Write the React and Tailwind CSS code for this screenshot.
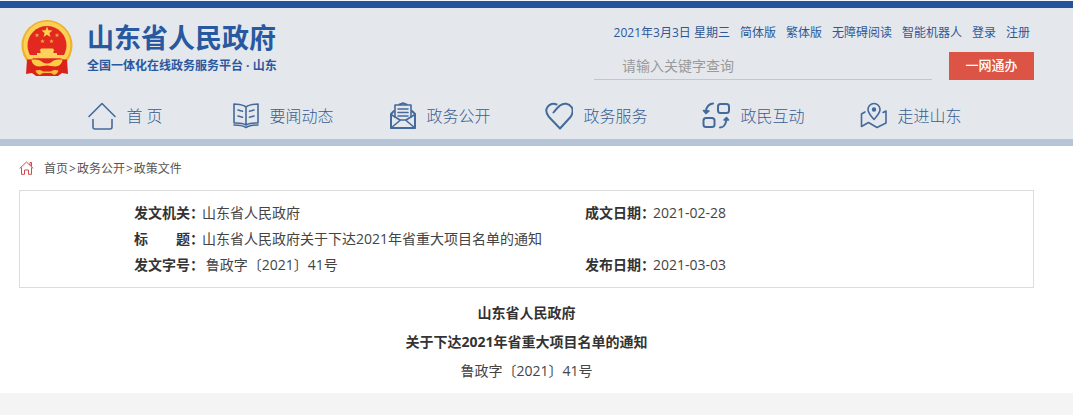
import { clsx } from 'clsx'

const topLinks = ['简体版', '繁体版', '无障碍阅读', '智能机器人', '登录', '注册']

function Emblem() {
  return (
    <svg width="52" height="56" viewBox="0 0 52 56" aria-hidden="true">
      <circle cx="26" cy="25.500" r="25.500" fill="#eeb02c" />
      <circle cx="26" cy="25" r="23.500" fill="#fbd155" />
      <circle cx="26" cy="25.500" r="19.500" fill="#e3281f" />
      <path d="M26 6.500l1.500 3.800 4 .2-3.100 2.500 1.100 3.900-3.500-2.200-3.500 2.200 1.100-3.900-3.100-2.500 4-.2z" fill="#fcd04a" />
      <g fill="#f6a840">
        <path d="M16 13l.6 1.400 1.600.1-1.200 1 .4 1.600-1.400-.9-1.400.9.4-1.600-1.200-1 1.600-.1z" />
        <path d="M36 13l.6 1.400 1.600.1-1.200 1 .4 1.600-1.400-.9-1.400.9.4-1.600-1.200-1 1.600-.1z" />
        <path d="M21.500 19l.6 1.400 1.600.1-1.200 1 .4 1.600-1.400-.9-1.400.9.4-1.600-1.200-1 1.600-.1z" />
        <path d="M30.500 19l.6 1.400 1.600.1-1.200 1 .4 1.600-1.400-.9-1.400.9.4-1.600-1.200-1 1.600-.1z" />
      </g>
      <path d="M20 28.500h12l1.500 2.200h-1V33H36v2h7.500l-1 3.200h-33L8.500 35H16v-2h3.500v-2.300h-1z" fill="#fbd25a" />
      {/* Ribbon under the gate */}
      <path d="M6 39.500l8-.2c4 .2 8 1.700 12 3.700 4-2 8-3.500 12-3.700l8 .2L47 54l-6-1-4 3H15l-4-3-6 1z" fill="#dc231b" />
      <path d="M10.500 40c5-1 9 0 11.500 2.500q4 2 8 0c2.500-2.500 6.500-3.500 11.500-2.500-.5 3.500-3 6.500-7.500 6.500-3 0-5-1-8-1s-5 1-8 1c-4.500 0-7-3-7.500-6.500z" fill="#fbcb45" />
      <path d="M14.500 50.500c3-1 6-.5 8 1h7c2-1.500 5-2 8-1-.5 2-2 4-4.500 4.500-1.500-1.500-3-2-4.500-2h-5c-1.500 0-3 .5-4.500 2-2.500-.5-4-2.500-4.500-4.500z" fill="#f7bd36" />
    </svg>
  )
}

function NavIcon({ children }) {
  return (
    <svg
      width="28"
      height="28"
      viewBox="0 0 28 28"
      fill="none"
      stroke="#446a9c"
      strokeWidth="1.600"
      strokeLinecap="round"
      strokeLinejoin="round"
      className="shrink-0"
      aria-hidden="true"
    >
      {children}
    </svg>
  )
}

const nav = [
  { label: '首 页', icon: <path d="M1 14.500L14 1.500l13 13M5 17.500V25q0 2 2 2h15q2 0 2-2v-7.500" /> },
  {
    label: '要闻动态',
    icon: (
      <>
        <path d="M15 5C11 2 7 2.500 3 2v19c4 0 8-.5 12 2 4-2.500 8-2 12-2V2c-4 .5-8 0-12 3zM15 5v18" />
        <path d="M7 8l4.500 1.200M7 14l4.500 1.200M23 8l-4.500 1.200M23 14l-4.500 1.200M3 23c4 0 8 0 12 2.500 4-2.500 8-2.500 12-2.500" />
      </>
    ),
  },
  {
    label: '政务公开',
    icon: (
      <>
        <path strokeWidth="2" d="M6 9l-3 3v14h24V12l-3-3" />
        <path d="M7 15V3h16v12M11 2.500L15 1l4 1.500" />
        <path d="M10 7h10M10 10.500h10M10 14h10M3 12.500l9 5.500M27 12.500L18 18M3 26l9.500-8h5L27 26" />
      </>
    ),
  },
  {
    label: '政务服务',
    icon: <path strokeWidth="2" d="M8.500 10.500C10.500 8 12.500 5.500 15 3.500c4-3 9-2 11.500 1.500 2 3 1 7-1 10L15 26.500 4 15C1.500 12 .5 8 2.500 5c2-3 6-4 9-2.500" />,
  },
  {
    label: '政民互动',
    icon: (
      <>
        <rect x="16" y="2" width="11" height="9" rx="2.500" strokeWidth="2" />
        <rect x="1.500" y="16" width="11" height="9" rx="2.500" strokeWidth="2" />
        <path strokeWidth="2" d="M11 1.500C7 2 4.500 5 4 9M18 25.500c4 0 6-4 6.500-8.500" />
        <path d="M1.500 8.500L4 11.500l3-2.500zM22 18l2.500-2.500 2 2.500z" fill="#446a9c" />
      </>
    ),
  },
  {
    label: '走进山东',
    icon: (
      <>
        <path d="M15 17.500c-3.500-4-6-6.500-6-10a6 6 0 0 1 12 0c0 3.500-2.500 6-6 10z" />
        <circle cx="15" cy="7.500" r="1.400" fill="#446a9c" />
        <path d="M6 10l-3.500 2v12.500l7-4 8.500 5 9-4.500V9L24 10.500" />
      </>
    ),
  },
]

function Header() {
  return (
    <header className="border-b-[7px] border-[#b6c4d7] bg-[#e4e8ed]">
      <div className="border-t border-[#f4f6f8]" />
      <div className="h-[7px] bg-[#25539b]" />
      <div className="flex h-[85px] items-start justify-between pr-[39px] pl-[21px]">
        <div className="flex items-start gap-3.5 pt-3 text-[#2859a0]">
          <Emblem />
          <div>
            <h1 className="text-[27px] leading-9 font-bold">山东省人民政府</h1>
            <p className="pt-0.5 text-xs leading-4 font-bold">全国一体化在线政务服务平台 · 山东</p>
          </div>
        </div>
        <div className="w-[440px] pt-4">
          <div className="flex justify-end gap-2.5 pr-1 text-xs leading-[18px] text-[#2f5796]">
            <span>2021年3月3日 星期三</span>
            {topLinks.map((link) => (
              <a key={link} href="#">{link}</a>
            ))}
          </div>
          <form className="mt-2.5 flex justify-between">
            <input
              type="text"
              aria-label="请输入关键字查询"
              placeholder="请输入关键字查询"
              className="h-7 w-[338px] border-b border-[#bec7d6] pl-7 text-sm placeholder:text-[#9a9a9a] focus:outline-none"
            />
            <button type="button" className="h-7 w-[85px] bg-[#dc5445] text-[13px] font-medium text-white">
              一网通办
            </button>
          </form>
        </div>
      </div>
      <nav className="grid h-[46px] grid-cols-6 pr-[84px] pl-[47px]">
        {nav.map((item) => (
          <a key={item.label} href="#" className="flex items-center justify-center gap-2.5 text-base font-light whitespace-nowrap text-[#3a5c90]">
            <NavIcon>{item.icon}</NavIcon>
            {item.label}
          </a>
        ))}
      </nav>
    </header>
  )
}

function Label({ children }) {
  return (
    <th scope="row" className="w-[68px] max-w-[68px] p-0 text-left font-bold whitespace-nowrap text-[#333]">
      {children}
    </th>
  )
}

function Value({ children, colSpan, className }) {
  return (
    <td colSpan={colSpan} className={clsx('p-0 font-normal', className)}>
      {children}
    </td>
  )
}

export default function App() {
  return (
    <div lang="zh-CN" className="min-h-screen bg-[#f4f4f4] font-['Open_Sans','Noto_Sans_CJK_SC',sans-serif]">
      <div className="flow-root bg-white">
        <Header />
        <main className="pr-[39px] pb-2 pl-[19px] text-[#444]">
          {/* Breadcrumb */}
          <div className="flex h-[44px] items-center gap-2.5 text-xs text-[#555]">
            <svg width="15" height="14" viewBox="0 0 15 14" fill="none" stroke="#cf4a4a" strokeLinejoin="round" aria-hidden="true">
              <path d="M.7 7.500L7.500 1l6.800 6.500M11 4V1.500h1.500v4M2.500 6.500v6.800h3V9h4v4.300h3V6.500" />
            </svg>
            <div className="flex gap-px pt-0.5">
              <a href="#">首页</a>&gt;<a href="#">政务公开</a>&gt;<a href="#">政策文件</a>
            </div>
          </div>

          {/* Document details */}
          <div className="border border-[#dcdcdc] py-[9px] pl-[114px] text-sm">
            <table className="w-full table-fixed border-collapse leading-[26px]">
              <tbody>
                <tr>
                  <Label>发文机关：</Label>
                  <Value className="w-[383px]">山东省人民政府</Value>
                  <Label>成文日期：</Label>
                  <Value>2021-02-28</Value>
                </tr>
                <tr>
                  <Label>标　　题：</Label>
                  <Value colSpan={3}>山东省人民政府关于下达2021年省重大项目名单的通知</Value>
                </tr>
                <tr>
                  <Label>发文字号：</Label>
                  <Value>&nbsp;鲁政字〔2021〕41号</Value>
                  <Label>发布日期：</Label>
                  <Value>2021-03-03</Value>
                </tr>
              </tbody>
            </table>
          </div>

          {/* Document heading */}
          <article className="pt-2.5 text-center text-sm leading-[29px]">
            <h2 className="font-bold text-[#333]">
              山东省人民政府
              <br />
              关于下达2021年省重大项目名单的通知
            </h2>
            <p>鲁政字〔2021〕41号</p>
          </article>
        </main>
      </div>
    </div>
  )
}
